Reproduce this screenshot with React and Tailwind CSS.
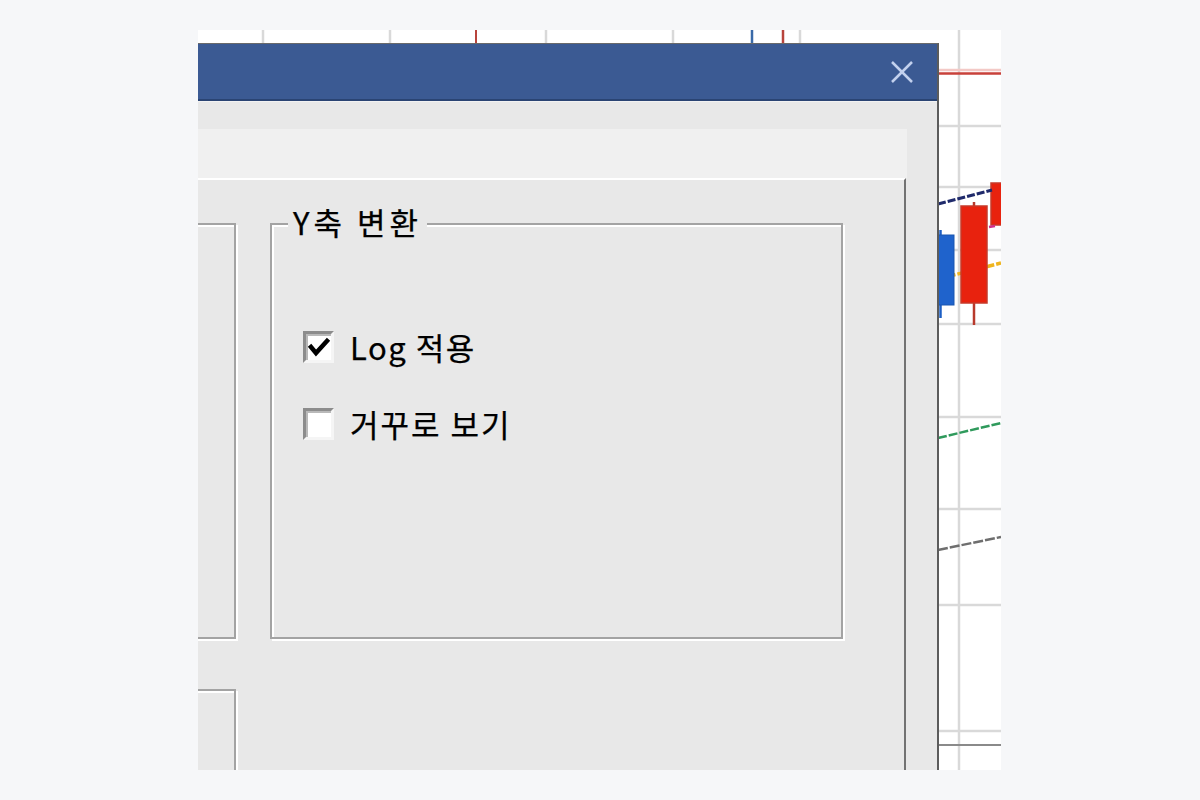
import React from "react";

function Chart() {
  const vGray = [65, 192, 348, 475, 602, 761];
  const hGray = [96, 157, 220, 294, 387, 479, 575, 701];
  return (
    <svg className="absolute inset-0" width="803" height="740" viewBox="0 0 803 740">
      {vGray.map((x) => (
        <line key={"v" + x} x1={x} y1="0" x2={x} y2="740" stroke="#d9d9d9" strokeWidth="2.5" />
      ))}
      {hGray.map((y) => (
        <line key={"h" + y} x1="0" y1={y} x2="803" y2={y} stroke="#d9d9d9" strokeWidth="2.5" />
      ))}
      <line x1="0" y1="715" x2="803" y2="715" stroke="#8a8a8a" strokeWidth="2" />
      <line x1="0" y1="40" x2="803" y2="40" stroke="#f3c9c6" strokeWidth="2.5" />
      <line x1="0" y1="43.5" x2="803" y2="43.5" stroke="#c8413a" strokeWidth="2.5" />
      <line x1="278" y1="0" x2="278" y2="14" stroke="#b8443c" strokeWidth="2" />
      <line x1="585" y1="0" x2="585" y2="14" stroke="#b8443c" strokeWidth="2.5" />
      <line x1="554" y1="0" x2="554" y2="14" stroke="#3a6aa8" strokeWidth="2.5" />
      {/* moving averages */}
      <line x1="740" y1="249" x2="803" y2="233" stroke="#efb51f" strokeWidth="3.5" strokeDasharray="8 2" />
      <line x1="740" y1="408" x2="803" y2="393" stroke="#2f9a5c" strokeWidth="2.5" strokeDasharray="9 2" />
      <line x1="740" y1="520" x2="803" y2="507" stroke="#6e6e6e" strokeWidth="2.5" strokeDasharray="10 2" />
      {/* candles */}
      <line x1="742.5" y1="200" x2="742.5" y2="288" stroke="#1d5fc4" strokeWidth="2.5" />
      <rect x="729" y="205" width="27" height="70" fill="#1f63cc" stroke="#1a56b0" strokeWidth="1" />
      <line x1="776" y1="172" x2="776" y2="295" stroke="#b83a2c" strokeWidth="2.5" />
      <rect x="763" y="176" width="26" height="97" fill="#e8220e" stroke="#c63a2a" strokeWidth="1.5" />
      <rect x="793" y="153" width="14" height="42" fill="#e8220e" stroke="#c63a2a" strokeWidth="1.5" />
      <line x1="791" y1="197" x2="797" y2="196" stroke="#d0308a" strokeWidth="2.5" />
      <line x1="740" y1="174" x2="794" y2="160" stroke="#1f2a6b" strokeWidth="3" strokeDasharray="8 2" />
    </svg>
  );
}

function Checkbox({ checked }) {
  return (
    <div className="w-[31px] h-[32px] shrink-0 bg-white border-[3px] border-t-[#8c8c8c] border-l-[#8c8c8c] border-r-[#f5f5f5] border-b-[#f5f5f5] shadow-[inset_2px_2px_0_#b9b9b9]">
      {checked && (
        <svg width="25" height="26" viewBox="0 0 25 26">
          <polyline points="5,13 10,19 21,7" fill="none" stroke="#000" strokeWidth="4.5" strokeLinejoin="miter" strokeLinecap="square" />
        </svg>
      )}
    </div>
  );
}

function GroupBox({ className, label, children }) {
  return (
    <div className={"relative border-2 border-[#a3a3a3] shadow-[inset_2px_2px_0_#ffffff,2px_2px_0_#ffffff] " + className}>
      {label && (
        <div className="absolute left-[16px] top-[-19px] px-[5px] bg-[#e8e8e8] text-[31px] leading-[32px] tracking-[4px] font-normal [-webkit-text-stroke:0.25px_#000] text-black">
          {label}
        </div>
      )}
      {children}
    </div>
  );
}

export default function App() {
  return (
    <div className="w-[1200px] h-[800px] bg-[#f6f7f9] pl-[198px] pt-[30px] font-['Noto_Sans_CJK_KR','Noto_Sans',sans-serif]">
      <div className="relative w-[803px] h-[740px] overflow-hidden bg-white">
        <Chart />
        <div className="absolute left-[-300px] top-[13px] w-[1041px] h-[800px] flex flex-col border-t border-t-[#6a6a6a] border-r-2 border-r-[#5c5c5c] bg-[#e8e8e8]">
          <div className="h-[57px] shrink-0 bg-[#3b5a93] border-b-2 border-b-[#2a4473] flex items-center justify-end pr-[23px]">
            <svg width="24" height="24" viewBox="0 0 24 24">
              <line x1="2" y1="2" x2="22" y2="22" stroke="#c3d1ee" strokeWidth="2.5" />
              <line x1="22" y1="2" x2="2" y2="22" stroke="#c3d1ee" strokeWidth="2.5" />
            </svg>
          </div>
          <div className="flex-1 flex flex-col border-t border-t-[#f2f2f2] pl-[10px] pr-[30px] pt-[27px]">
            <div className="h-[49px] shrink-0 bg-[#f0f0f0]"></div>
            <div className="flex-1 mr-[1px] border-t-2 border-l-2 border-t-white border-l-white border-r-2 border-r-[#727272] pt-[43px] flex">
              <div className="ml-[20px] w-[306px] flex flex-col gap-[50px]">
                <GroupBox className="h-[416px] shrink-0" />
                <GroupBox className="h-[300px] shrink-0" />
              </div>
              <GroupBox className="ml-[34px] w-[573px] h-[416px]" label="Y축 변환">
                <div className="pt-[106px] pl-[31px] flex flex-col gap-[45px]">
                  <div className="flex items-center gap-[16px]">
                    <Checkbox checked />
                    <span className="text-[31px] leading-[32px] tracking-[1.5px] font-normal [-webkit-text-stroke:0.25px_#000] text-black">Log 적용</span>
                  </div>
                  <div className="flex items-center gap-[16px]">
                    <Checkbox />
                    <span className="text-[31px] leading-[32px] tracking-[2px] font-normal [-webkit-text-stroke:0.25px_#000] text-black">거꾸로 보기</span>
                  </div>
                </div>
              </GroupBox>
            </div>
          </div>
        </div>
      </div>
    </div>
  );
}
